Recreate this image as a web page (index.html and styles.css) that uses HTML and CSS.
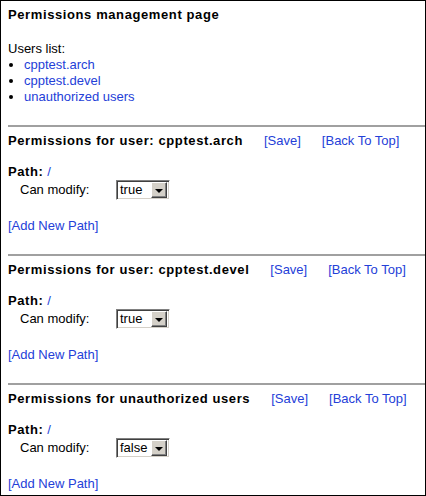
FILE: index.html
```html
<!DOCTYPE html>
<html>
<head>
<meta charset="utf-8">
<title>Permissions management page</title>
<link rel="stylesheet" href="styles.css">
</head>
<body>
<div class="page" id="top">
  <div class="title">Permissions management page</div>
  <div class="users">
    <div class="users-label">Users list:</div>
    <ul class="user-list">
      <li><a href="#u1">cpptest.arch</a></li>
      <li><a href="#u2">cpptest.devel</a></li>
      <li><a href="#u3">unauthorized users</a></li>
    </ul>
  </div>

  <section class="section" id="u1">
    <div class="rule"></div>
    <div class="head">
      <span class="head-title">Permissions for user: cpptest.arch</span>
      <a href="#save1" class="head-link">[Save]</a>
      <a href="#top" class="head-link">[Back To Top]</a>
    </div>
    <div class="path"><span class="path-label">Path:</span> <a href="#p1">/</a></div>
    <div class="perm">
      <span class="perm-label">Can modify:</span>
      <span class="select"><span class="select-value">true</span><span class="select-btn"><span class="arrow"></span></span></span>
    </div>
    <a href="#add1" class="add">[Add New Path]</a>
  </section>

  <section class="section" id="u2">
    <div class="rule"></div>
    <div class="head">
      <span class="head-title">Permissions for user: cpptest.devel</span>
      <a href="#save2" class="head-link">[Save]</a>
      <a href="#top" class="head-link">[Back To Top]</a>
    </div>
    <div class="path"><span class="path-label">Path:</span> <a href="#p2">/</a></div>
    <div class="perm">
      <span class="perm-label">Can modify:</span>
      <span class="select"><span class="select-value">true</span><span class="select-btn"><span class="arrow"></span></span></span>
    </div>
    <a href="#add2" class="add">[Add New Path]</a>
  </section>

  <section class="section" id="u3">
    <div class="rule"></div>
    <div class="head">
      <span class="head-title">Permissions for unauthorized users</span>
      <a href="#save3" class="head-link">[Save]</a>
      <a href="#top" class="head-link">[Back To Top]</a>
    </div>
    <div class="path"><span class="path-label">Path:</span> <a href="#p3">/</a></div>
    <div class="perm">
      <span class="perm-label">Can modify:</span>
      <span class="select"><span class="select-value">false</span><span class="select-btn"><span class="arrow"></span></span></span>
    </div>
    <a href="#add3" class="add">[Add New Path]</a>
  </section>
</div>
</body>
</html>
```
FILE: styles.css
```css
html, body {
  margin: 0;
  padding: 0;
  background: #ffffff;
}
body {
  font-family: "Liberation Sans", Arial, sans-serif;
  font-size: 13px;
  line-height: 16px;
  color: #000000;
}
a,
a:link,
a:visited {
  color: #2440d8;
  text-decoration: none;
}
.page {
  box-sizing: border-box;
  width: 426px;
  height: 496px;
  border: 1px solid #000000;
  overflow: hidden;
  padding-left: 7px;
}
.title {
  margin-top: 6px;
  font-weight: bold;
  letter-spacing: 0.6px;
}
.users {
  margin-top: 18px;
}
.user-list {
  margin: 0;
  padding: 0 0 0 16px;
  list-style: disc;
}
.section {
  display: flex;
  flex-direction: column;
  align-items: flex-start;
}
.rule {
  align-self: stretch;
  margin-top: 20px;
  height: 2px;
  background: #a0a0a0;
}
.head {
  margin-top: 6px;
  display: flex;
  gap: 21px;
}
.head-title {
  font-weight: bold;
  letter-spacing: 0.6px;
}
.path {
  margin-top: 15px;
}
.path-label {
  font-weight: bold;
  letter-spacing: 0.6px;
}
.perm {
  display: flex;
  align-items: center;
  height: 20px;
  padding-left: 12px;
}
.perm-label {
  width: 96px;
}
.select {
  box-sizing: border-box;
  display: inline-flex;
  align-items: center;
  width: 54px;
  height: 20px;
  border-top: 1px solid #808080;
  border-left: 1px solid #808080;
  border-right: 1px solid #ffffff;
  border-bottom: 1px solid #ffffff;
  box-shadow: inset 1px 1px 0 #404040, inset -1px -1px 0 #d4d0c8;
  background: #ffffff;
  padding: 2px;
}
.select-value {
  flex: 1;
  padding-left: 1px;
  line-height: 14px;
}
.select-btn {
  box-sizing: border-box;
  width: 16px;
  height: 16px;
  background: #d4d0c8;
  border-top: 1px solid #ffffff;
  border-left: 1px solid #ffffff;
  border-right: 1px solid #404040;
  border-bottom: 1px solid #404040;
  box-shadow: inset -1px -1px 0 #808080;
  display: flex;
  align-items: center;
  justify-content: center;
}
.arrow {
  width: 0;
  height: 0;
  border-left: 4px solid transparent;
  border-right: 4px solid transparent;
  border-top: 4px solid #000000;
  margin: 1px 1px 0 0;
}
.add {
  margin-top: 18px;
}
```
